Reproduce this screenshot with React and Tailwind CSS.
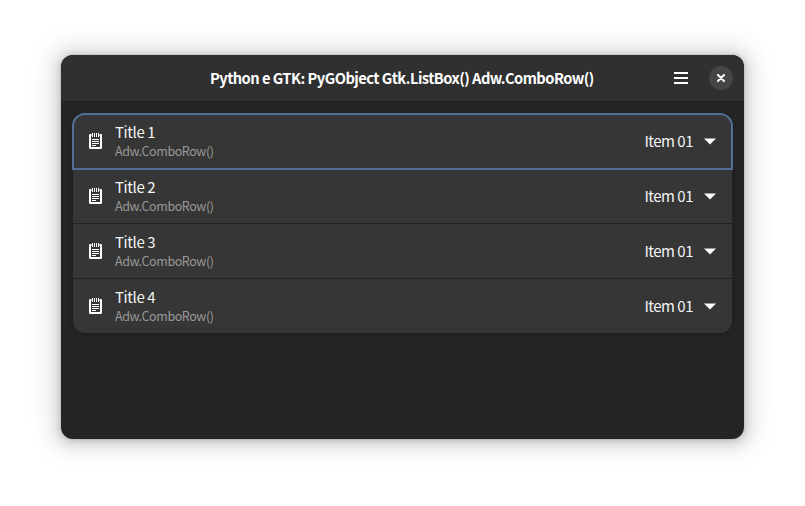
const rows = [1, 2, 3, 4];

function NotesIcon() {
  return (
    <svg className="ml-4 h-4 w-[13px] shrink-0" viewBox="0 0 13 16" fill="none" stroke="#fff">
      <path d="M2.5 2H1v12.5c0 .3.2.5.5.5h10c.3 0 .5-.2.5-.5V2h-1.5" strokeWidth="2" strokeLinejoin="round" />
      <path d="M3.5 0v4M5.5 0v4M7.5 0v4M9.5 0v4" strokeWidth="1" />
      <path d="M3 6.5h7M3 8.5h7M3 10.5h7M3 12.5h4" strokeWidth="1" />
    </svg>
  );
}

function ComboRow({ n }) {
  const first = n === 1;
  return (
    <div className={`relative flex items-center ${n < 4 ? "h-[55px] border-b border-[#222222]" : "h-[54px]"}`}>
      <NotesIcon />
      <div className="ml-[13px] flex flex-col">
        <span className="h-[19px] text-[15px] leading-[19px] tracking-[-0.4px] text-[#f4f4f4]">Title {n}</span>
        <span className="h-[19px] text-[12.5px] leading-[19px] tracking-[-0.43px] text-[#989898]">Adw.ComboRow()</span>
      </div>
      <span className="ml-auto text-[15px] leading-5 tracking-[-0.5px] text-[#f4f4f4]">Item 01</span>
      <svg className="mr-4 ml-[11px] h-[7px] w-3" viewBox="0 0 12 7" fill="#fff">
        <path d="M0 .5h12L6 6.5z" />
      </svg>
      {first && <div className="absolute -inset-x-px -top-px -bottom-[2px] rounded-t-[13px] border-2 border-[#526f95]" />}
    </div>
  );
}

export default function App() {
  return (
    <div className="h-[506px] w-[805px] overflow-hidden bg-white pt-[55px] pl-[61px] font-['Noto_Sans_CJK_SC',sans-serif]">
      <div className="flex h-[384px] w-[683px] flex-col rounded-xl bg-[#242424] shadow-[0_0_0_1px_rgba(0,0,0,0.05),0_1px_5px_1px_rgba(0,0,0,0.09),0_2px_14px_3px_rgba(0,0,0,0.14),0_0_22px_14px_rgba(0,0,0,0.07)]">
        <header className="flex h-[47px] shrink-0 items-center rounded-t-xl border-b border-[#202020] bg-[#303030]">
          <h1 className="ml-[149px] w-[384px] text-[14.67px] leading-5 font-bold tracking-[-0.53px] whitespace-nowrap text-white">
            Python e GTK: PyGObject Gtk.ListBox() Adw.ComboRow()
          </h1>
          <button className="ml-[80px]" aria-label="Menu">
            <svg className="h-3 w-3.5" viewBox="0 0 14 12" fill="#fff">
              <path d="M0 0h14v2H0zM0 5h14v2H0zM0 10h14v2H0z" />
            </svg>
          </button>
          <button className="ml-[21px] flex size-6 items-center justify-center rounded-full bg-[#454545]" aria-label="Close">
            <svg className="size-2" viewBox="0 0 8 8" fill="none" stroke="#fff" strokeWidth="2" strokeLinecap="round">
              <path d="M1 1l6 6M7 1L1 7" />
            </svg>
          </button>
        </header>
        <main className="px-3 pt-3">
          <div className="rounded-xl bg-[#363636] shadow-[0_0_0_1px_rgba(0,0,0,0.03),0_1px_3px_1px_rgba(0,0,0,0.07),0_2px_6px_2px_rgba(0,0,0,0.03)]">
            {rows.map((n) => (
              <ComboRow key={n} n={n} />
            ))}
          </div>
        </main>
      </div>
    </div>
  );
}
